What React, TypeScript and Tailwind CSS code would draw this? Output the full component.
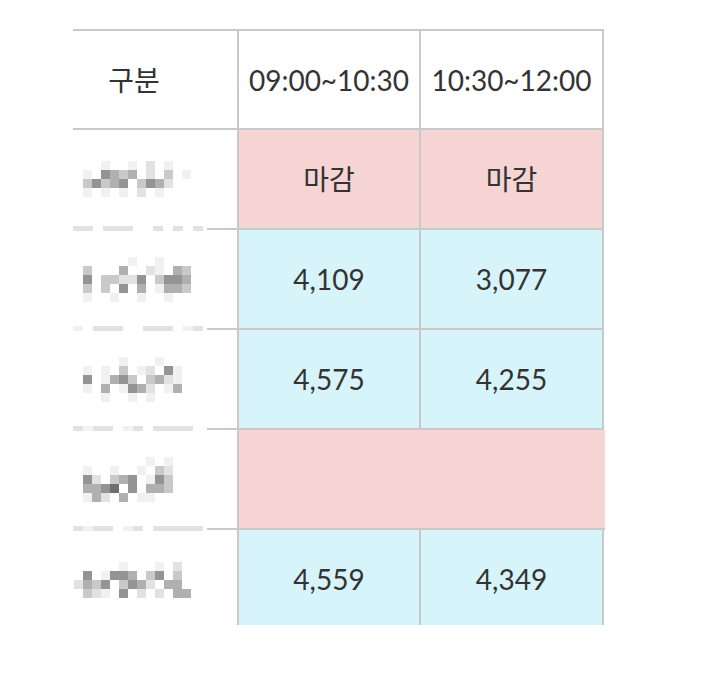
const shades: Record<string, string> = {
  '1': 'bg-[#f1f1f1]',
  '2': 'bg-[#e2e2e2]',
  '3': 'bg-[#c9c9c9]',
  '4': 'bg-[#b0b0b0]',
  '5': 'bg-[#949494]',
  '6': 'bg-[#6f6f6f]',
};

const mosaics: string[][] = [
  [
    '   1  1 2 1  ',
    ' 1 5434 2 3 1',
    ' 35345 3542  ',
    ' 1 1 1 2 1   ',
  ],
  [
    '      1  1   ',
    ' 3   4  21 43',
    ' 5 33225 3554',
    ' 3 3 5 4 1443',
    ' 1  1  1  1  ',
  ],
  [
    '     1   1   ',
    ' 1 1 3 12 51 ',
    ' 5 1453 3421 ',
    ' 1 4 1542 14 ',
    '   1  1 1    ',
  ],
  [
    '        1 1  ',
    ' 1  1  1 32  ',
    ' 52 345 153  ',
    ' 4456 5 443  ',
    ' 142 4 11    ',
  ],
  [
    '     1   1 2 ',
    ' 5 1554 35 3 ',
    '2435 3542 44 ',
    ' 321 5 2 2 44',
  ],
];

const seps: string[] = [
  '22 222  2 2 2',
  '1 222  222 12',
  '2122 12 2222 ',
  '2122 12 22222',
];

function Mosaic({ rows }: { rows: string[] }) {
  return (
    <div className="flex flex-col">
      {rows.map((r, i) => (
        <div key={i} className="flex">
          {r.split('').map((c, j) => (
            <div key={j} className={`w-[9px] h-[9px] ${shades[c] ?? ''}`} />
          ))}
        </div>
      ))}
    </div>
  );
}

function Sep({ pattern }: { pattern: string }) {
  return (
    <div className="flex items-center h-[2px] relative">
      <div className="absolute left-0 top-[-2px] flex">
        {pattern.split('').map((c, j) => (
          <div key={j} className={`w-[10px] h-[5px] ${shades[c] ?? ''}`} />
        ))}
      </div>
      <div className="ml-auto w-[32px] h-[2px] bg-[#c9c9c9]" />
    </div>
  );
}

type Row = { vals: string[] | null; closed: boolean };

const rows: Row[] = [
  { vals: ['마감', '마감'], closed: true },
  { vals: ['4,109', '3,077'], closed: false },
  { vals: ['4,575', '4,255'], closed: false },
  { vals: null, closed: true },
  { vals: ['4,559', '4,349'], closed: false },
];

export default function App() {
  return (
    <div
      className="w-[717px] h-[685px] bg-white overflow-hidden text-[#333333]"
      style={{ fontFamily: 'Lato, "Noto Sans CJK KR", sans-serif' }}
    >
      <div className="ml-[73px] mt-[29px] w-[532px] h-[596px] overflow-hidden">
        {/* header */}
        <div className="flex h-[101px] border-t-2 border-b-2 border-[#c9c9c9] w-[531px]">
          <div className="w-[166px] flex items-center border-r-2 border-[#c9c9c9]">
            <div className="w-[122px] text-center text-[28px]">구분</div>
          </div>
          <div className="w-[182px] flex items-center justify-center border-r-2 border-[#c9c9c9] text-[28px]">
            09:00~10:30
          </div>
          <div className="w-[183px] flex items-center justify-center border-r-2 border-[#c9c9c9] text-[28px]">
            10:30~12:00
          </div>
        </div>
        {rows.map((row, i) => (
          <div key={i} className="flex h-[100px]">
            <div className="w-[166px] flex flex-col">
              <div className="flex-1 flex items-center pl-[1px] border-r-2 border-[#c9c9c9]">
                <Mosaic rows={mosaics[i]} />
              </div>
              {i < rows.length - 1 && <Sep pattern={seps[i]} />}
            </div>
            {row.vals ? (
              row.vals.map((v, j) => (
                <div
                  key={j}
                  className={`${j === 0 ? 'w-[182px]' : 'w-[183px]'} flex items-center justify-center border-r-2 border-b-2 border-[#c9c9c9] text-[28px] ${
                    row.closed ? 'bg-[#f6d4d4]' : 'bg-[#d8f4fb]'
                  }`}
                >
                  {v}
                </div>
              ))
            ) : (
              <div className="w-[366px] bg-[#f6d4d4] border-b-2 border-[#c9c9c9]" />
            )}
          </div>
        ))}
      </div>
    </div>
  );
}
